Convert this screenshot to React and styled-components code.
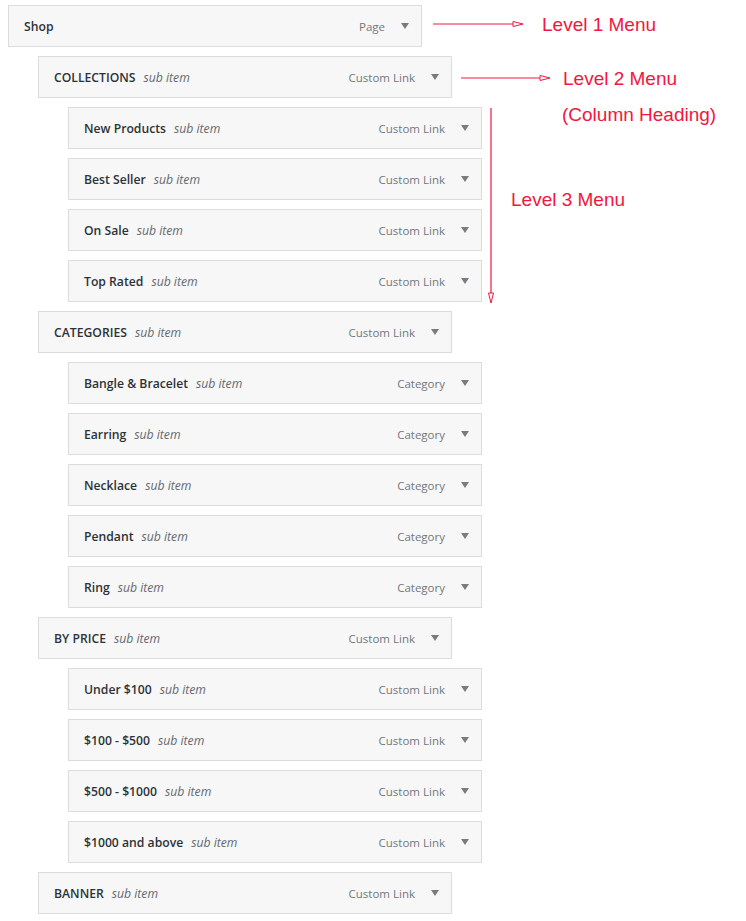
import React from "react";
import styled, { createGlobalStyle } from "styled-components";

const Global = createGlobalStyle`
  html, body { margin: 0; padding: 0; background: #ffffff; }
  body { font-family: "Open Sans", "Noto Sans", Arial, sans-serif; }
`;

const Page = styled.div`
  position: relative;
  width: 746px;
  height: 921px;
  padding: 5px 0 0 8px;
  box-sizing: border-box;
  overflow: hidden;
`;

const MenuList = styled.ul`
  list-style: none;
  margin: 0;
  padding: 0;
  display: flex;
  flex-direction: column;
  gap: 9px;
`;

const MenuItem = styled.li`
  margin-left: ${(p) => (p.$depth - 1) * 30}px;
  width: 414px;
  height: 42px;
  box-sizing: border-box;
  border: 1px solid #dcdcde;
  background: #f7f7f7;
  display: flex;
  align-items: center;
  padding: 0 11px 0 15px;
`;

const Title = styled.span`
  flex: 1;
  font-size: 12.2px;
  font-weight: 600;
  color: #2c3338;
  white-space: nowrap;
`;

const SubLabel = styled.em`
  font-style: italic;
  font-weight: 400;
  color: #646970;
  margin-left: 8px;
`;

const ItemType = styled.span`
  font-size: 11.5px;
  color: #72777c;
  margin-right: 16px;
`;

const Toggle = styled.span`
  width: 8px;
  height: 6px;
  display: inline-flex;
  margin-right: 1px;
  svg { display: block; }
`;

const Note = styled.div`
  position: absolute;
  left: ${(p) => p.$x}px;
  top: ${(p) => p.$y}px;
  font-family: "Liberation Sans", Arial, sans-serif;
  font-size: 19px;
  line-height: 19px;
  color: #f2163e;
  white-space: nowrap;
`;

const Pointer = styled.svg`
  position: absolute;
  left: ${(p) => p.$x}px;
  top: ${(p) => p.$y}px;
  overflow: visible;
`;

const items = [
  { d: 1, t: "Shop", type: "Page" },
  { d: 2, t: "COLLECTIONS", type: "Custom Link" },
  { d: 3, t: "New Products", type: "Custom Link" },
  { d: 3, t: "Best Seller", type: "Custom Link" },
  { d: 3, t: "On Sale", type: "Custom Link" },
  { d: 3, t: "Top Rated", type: "Custom Link" },
  { d: 2, t: "CATEGORIES", type: "Custom Link" },
  { d: 3, t: "Bangle & Bracelet", type: "Category" },
  { d: 3, t: "Earring", type: "Category" },
  { d: 3, t: "Necklace", type: "Category" },
  { d: 3, t: "Pendant", type: "Category" },
  { d: 3, t: "Ring", type: "Category" },
  { d: 2, t: "BY PRICE", type: "Custom Link" },
  { d: 3, t: "Under $100", type: "Custom Link" },
  { d: 3, t: "$100 - $500", type: "Custom Link" },
  { d: 3, t: "$500 - $1000", type: "Custom Link" },
  { d: 3, t: "$1000 and above", type: "Custom Link" },
  { d: 2, t: "BANNER", type: "Custom Link" },
];

const Caret = () => (
  <Toggle>
    <svg width="8" height="6" viewBox="0 0 8 6">
      <path d="M0 0 L8 0 L4 6 Z" fill="#787c82" />
    </svg>
  </Toggle>
);

const HArrow = ({ x, y, len }) => (
  <Pointer $x={x} $y={y - 4} width={len + 1} height="8">
    <line x1="0" y1="4" x2={len - 10} y2="4" stroke="#f2163e" strokeWidth="1" />
    <path d={`M${len - 10} 1.5 L${len} 4 L${len - 10} 6.5 Z`} fill="#fff" stroke="#f2163e" strokeWidth="1" />
  </Pointer>
);

const VArrow = ({ x, y, len }) => (
  <Pointer $x={x - 4} $y={y} width="8" height={len + 1}>
    <line x1="4" y1="0" x2="4" y2={len - 10} stroke="#f2163e" strokeWidth="1.2" />
    <path d={`M1.5 ${len - 10} L4 ${len} L6.5 ${len - 10} Z`} fill="#fff" stroke="#f2163e" strokeWidth="1" />
  </Pointer>
);

export default function App() {
  return (
    <>
      <Global />
      <Page>
        <MenuList>
          {items.map((it, i) => (
            <MenuItem key={i} $depth={it.d}>
              <Title>
                {it.t}
                {it.d > 1 && <SubLabel>sub item</SubLabel>}
              </Title>
              <ItemType>{it.type}</ItemType>
              <Caret />
            </MenuItem>
          ))}
        </MenuList>
        <HArrow x={433} y={23.5} len={90} />
        <HArrow x={461} y={77.5} len={89} />
        <VArrow x={490.5} y={108} len={195} />
        <Note $x={542} $y={15}>Level 1 Menu</Note>
        <Note $x={563} $y={69}>Level 2 Menu</Note>
        <Note $x={562} $y={105}>(Column Heading)</Note>
        <Note $x={511} $y={189.5}>Level 3 Menu</Note>
      </Page>
    </>
  );
}
